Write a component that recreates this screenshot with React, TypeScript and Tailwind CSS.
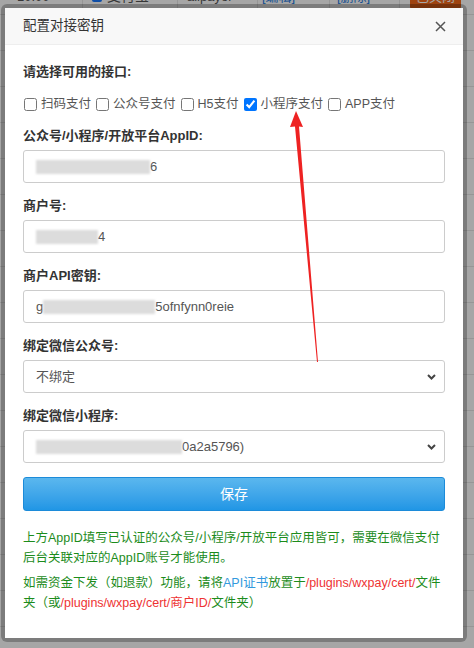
import React from "react";

const FONT = { fontFamily: '"Liberation Sans", "Noto Sans CJK SC", sans-serif' };

// blurred placeholder block standing in for masked values
function Mask({ w }: { w: number }) {
  return (
    <span
      className="inline-block h-[14px] align-middle bg-[#dcdcdc] blur-[1px]"
      style={{ width: w }}
    />
  );
}

function Field({ label, children }: { label: string; children: React.ReactNode }) {
  return (
    <div className="mb-[13px]">
      <div className="text-[13px] leading-5 font-bold text-[#333] mb-[4px]">{label}</div>
      {children}
    </div>
  );
}

function Box({ children, select }: { children: React.ReactNode; select?: boolean }) {
  return (
    <div className="h-[33px] border border-[#ccc] rounded-[3px] bg-white pl-[12px] pr-[8px] flex items-center justify-between text-[13px] text-[#555]">
      <div className="flex items-center">{children}</div>
      {select && (
        <svg width="9" height="6" viewBox="0 0 9 6">
          <path d="M1 1 L4.5 4.5 L8 1" fill="none" stroke="#444" strokeWidth="2" />
        </svg>
      )}
    </div>
  );
}

const checks = [
  { name: "扫码支付", on: false },
  { name: "公众号支付", on: false },
  { name: "H5支付", on: false },
  { name: "小程序支付", on: true },
  { name: "APP支付", on: false },
];

export default function App() {
  return (
    <div className="relative w-[474px] h-[648px] overflow-hidden bg-white" style={FONT}>
      {/* page behind the dialog */}
      <div className="-mt-[21px] text-[13px] text-[#555]">
        {Array.from({ length: 18 }).map((_, i) => (
          <div key={i} className="flex h-[36px] border-b border-[#e6e6e6]">
            <div className="w-[83px] border-r border-[#e6e6e6] flex items-center pl-[17px]">{i === 0 ? "10:00" : ""}</div>
            <div className="w-[95px] border-r border-[#e6e6e6] flex items-center pl-[9px] gap-[5px]">
              {i === 0 && <span className="w-[10px] h-[10px] bg-[#1677ff] rounded-[2px]" />}
              {i === 0 ? <span className="text-[14px]">支付宝</span> : ""}
            </div>
            <div className="w-[80px] border-r border-[#e6e6e6] flex items-center pl-[9px]">{i === 0 ? "alipayol" : ""}</div>
            <div className="w-[72px] border-r border-[#e6e6e6] flex items-center pl-[4px] text-[#2277dd]">{i === 0 ? "[编辑]" : ""}</div>
            <div className="w-[70px] border-r border-[#e6e6e6] flex items-center pl-[7px] text-[#2277dd]">{i === 0 ? "[删除]" : ""}</div>
            <div className="flex-1 flex items-center pl-[10px]">
              {i === 0 && <span className="px-[6px] h-[24px] leading-[24px] bg-[#f5681a] text-white rounded-[2px]">已关闭</span>}
            </div>
          </div>
        ))}
      </div>
      <div className="absolute inset-0 bg-black/35" />

      {/* dialog */}
      <div className="absolute left-[1px] top-[4px] rounded-[6px] bg-black/25 p-[4px]">
        <div className="w-[458px] bg-white">
          <div className="h-[37px] bg-[#f8f8f8] border-b border-[#eee] px-[18px] flex items-center justify-between">
            <span className="text-[13.5px] text-[#333]">配置对接密钥</span>
            <svg width="11" height="11" viewBox="0 0 11 11" className="mr-[-1px]">
              <path d="M1 1 L10 10 M10 1 L1 10" stroke="#555" strokeWidth="1.5" />
            </svg>
          </div>

          <div className="px-[18px] pt-[17px] pb-[25px]">
            <div className="text-[13px] leading-5 font-bold text-[#333]">请选择可用的接口:</div>
            <div className="mt-[12px] mb-[12px] flex items-center h-5 text-[12.5px] text-[#555]">
              {checks.map((c) => (
                <label key={c.name} className="flex items-center mr-[4px]">
                  <input type="checkbox" defaultChecked={c.on} className="w-[13px] h-[13px] m-0 ml-[1px] mr-[4px]" />
                  <span>{c.name}</span>
                </label>
              ))}
            </div>

            <Field label="公众号/小程序/开放平台AppID:">
              <Box>
                <Mask w={114} />
                <span>6</span>
              </Box>
            </Field>
            <Field label="商户号:">
              <Box>
                <Mask w={62} />
                <span>4</span>
              </Box>
            </Field>
            <Field label="商户API密钥:">
              <Box>
                <span>g</span>
                <Mask w={112} />
                <span>5ofnfynn0reie</span>
              </Box>
            </Field>
            <Field label="绑定微信公众号:">
              <Box select>
                <span>不绑定</span>
              </Box>
            </Field>
            <Field label="绑定微信小程序:">
              <Box select>
                <Mask w={146} />
                <span>0a2a5796)</span>
              </Box>
            </Field>

            <div className="mt-[14px] h-[34px] rounded-[3px] border border-[#1c8bd9] bg-gradient-to-b from-[#5ab7ee] to-[#2096e5] flex items-center justify-center text-white text-[14px]">
              保存
            </div>

            <p className="mt-[17px] text-[12.5px] leading-5 text-[#1c8c1c]">
              上方AppID填写已认证的公众号/小程序/开放平台应用皆可，需要在微信支付后台关联对应的AppID账号才能使用。
            </p>
            <p className="mt-[5px] text-[12.5px] leading-5 text-[#1c8c1c]">
              如需资金下发（如退款）功能，请将<span className="text-[#3399dd]">API证书</span>放置于
              <span className="text-[#ee3333]">/plugins/wxpay/cert/</span>文件夹（或
              <span className="text-[#ee3333]">/plugins/wxpay/cert/商户ID/</span>文件夹）
            </p>
          </div>
        </div>
      </div>

      {/* red annotation arrow */}
      <svg className="absolute inset-0 pointer-events-none" width="474" height="648" viewBox="0 0 474 648">
        <polygon
          points="296,111 303,127 299,126.5 318,362 317,362 295,126.5 290,127"
          fill="#ee2222"
        />
      </svg>
    </div>
  );
}
